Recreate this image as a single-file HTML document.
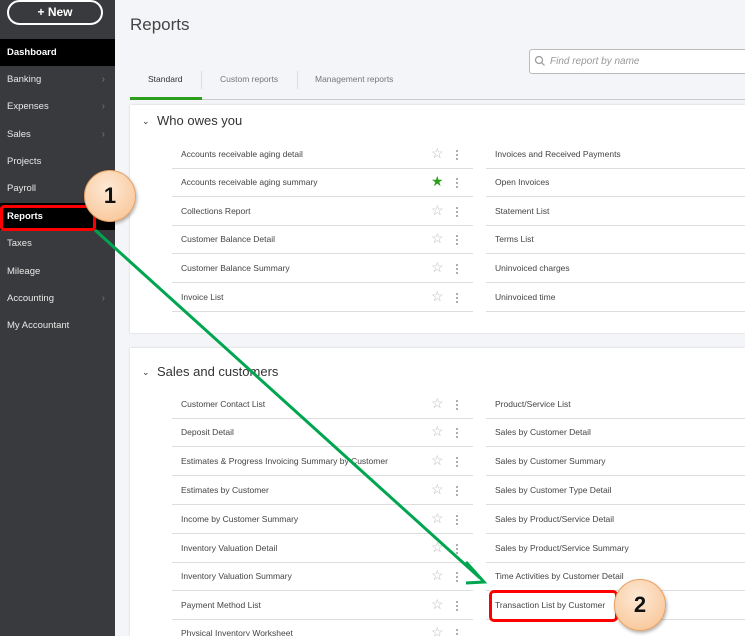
<!DOCTYPE html>
<html style="overflow:hidden;width:745px;height:636px"><head><style>
*{margin:0;padding:0;box-sizing:border-box}
body{width:745px;height:636px;overflow:hidden;background:#f4f5f8;font-family:"Liberation Sans",sans-serif;position:relative}
.sb{position:absolute;left:0;top:0;width:115px;height:636px;background:#393a3d}
.new{position:absolute;left:7px;top:0px;width:96px;height:25px;border:2px solid #fff;border-radius:13px;color:#fff;font-size:12px;font-weight:bold;text-align:center;line-height:21px}
.nav{position:absolute;left:0;width:115px;height:27px;color:#e8e8e8;font-size:9.5px;padding-left:7px;line-height:27px}
.nav.on{background:#000;color:#fff;font-weight:bold}
.nav .ch{position:absolute;right:10px;color:#777;font-size:10px}
.t{position:absolute;color:#444;font-size:8.5px}
.card{position:absolute;left:130px;width:615px;background:#fff;box-shadow:0 0 2px #ccc}
.row{position:absolute;height:1px;background:#ddd}
.st{position:absolute;color:#bbb;font-size:14px;line-height:14px}
.dt{position:absolute;width:2px;height:11px;background:radial-gradient(circle,#999 0.9px,transparent 1.1px) 0 0/2px 4px}
.circ{position:absolute;width:52px;height:52px;border-radius:50%;background:radial-gradient(circle at 45% 35%,#fde9d6,#f8c08d);border:1px solid #e8a060;font-size:22px;font-weight:bold;text-align:center;line-height:50px;color:#111;box-shadow:1px 2px 3px rgba(0,0,0,.3)}
.chev{position:absolute;left:142px;font-size:9px;color:#333}
</style></head><body>
<div class="sb">
<div class="new">+ New</div>
<div class="nav on" style="top:39px">Dashboard</div>
<div class="nav" style="top:66px">Banking<span class="ch">›</span></div>
<div class="nav" style="top:93px">Expenses<span class="ch">›</span></div>
<div class="nav" style="top:121px">Sales<span class="ch">›</span></div>
<div class="nav" style="top:148px">Projects</div>
<div class="nav" style="top:175px">Payroll</div>
<div class="nav on" style="top:203px">Reports</div>
<div class="nav" style="top:230px">Taxes</div>
<div class="nav" style="top:258px">Mileage</div>
<div class="nav" style="top:285px">Accounting<span class="ch">›</span></div>
<div class="nav" style="top:312px">My Accountant</div>
</div>
<div style="position:absolute;left:0;top:205px;width:96px;height:26px;border:3px solid #f00;border-radius:4px"></div>
<div style="position:absolute;left:130px;top:15px;font-size:17px;color:#444">Reports</div>
<div style="position:absolute;left:529px;top:49px;width:220px;height:25px;border:1px solid #bbb;border-radius:3px;background:#fff;font-size:10px;color:#999;font-style:italic;line-height:23px;padding-left:20px">Find report by name</div>
<svg style="position:absolute;left:534px;top:55px" width="12" height="12"><circle cx="5" cy="5" r="3.5" fill="none" stroke="#999" stroke-width="1.2"/><line x1="7.5" y1="7.5" x2="10.5" y2="10.5" stroke="#999" stroke-width="1.2"/></svg>
<div class="t" style="left:148px;top:74px;color:#333">Standard</div>
<div class="t" style="left:220px;top:74px;color:#777">Custom reports</div>
<div class="t" style="left:315px;top:74px;color:#777">Management reports</div>
<div style="position:absolute;left:201px;top:71px;width:1px;height:18px;background:#ddd"></div>
<div style="position:absolute;left:297px;top:71px;width:1px;height:18px;background:#ddd"></div>
<div style="position:absolute;left:130px;top:99px;width:615px;height:1px;background:#ccc"></div>
<div style="position:absolute;left:130px;top:97px;width:72px;height:3px;background:#2ca01c"></div>
<div class="card" style="top:105px;height:228px"></div>
<div class="card" style="top:348px;height:288px"></div>
<div class="chev" style="top:116px">&#8964;</div>
<div style="position:absolute;left:157px;top:113px;font-size:13px;color:#333">Who owes you</div>
<div class="chev" style="top:367px">&#8964;</div>
<div style="position:absolute;left:157px;top:364px;font-size:13px;color:#333">Sales and customers</div>
<div id="rows"></div>
<svg style="position:absolute;left:0;top:0" width="745" height="636">
<line x1="95" y1="230" x2="480" y2="578" stroke="#00a64f" stroke-width="3"/>
<polyline points="466,562 484,582 466,583" fill="none" stroke="#00a64f" stroke-width="3"/>
</svg>
<div style="position:absolute;left:489px;top:590px;width:129px;height:32px;border:3px solid #f00;border-radius:5px"></div>
<div class="circ" style="left:84px;top:170px">1</div>
<div class="circ" style="left:614px;top:579px">2</div>
<script>
var L1=["Accounts receivable aging detail","Accounts receivable aging summary","Collections Report","Customer Balance Detail","Customer Balance Summary","Invoice List"];
var R1=["Invoices and Received Payments","Open Invoices","Statement List","Terms List","Uninvoiced charges","Uninvoiced time"];
var Y1=[154,182,211,239,268,297];
var L2=["Customer Contact List","Deposit Detail","Estimates & Progress Invoicing Summary by Customer","Estimates by Customer","Income by Customer Summary","Inventory Valuation Detail","Inventory Valuation Summary","Payment Method List","Physical Inventory Worksheet"];
var R2=["Product/Service List","Sales by Customer Detail","Sales by Customer Summary","Sales by Customer Type Detail","Sales by Product/Service Detail","Sales by Product/Service Summary","Time Activities by Customer Detail","Transaction List by Customer",""];
var Y2=[404,432,461,490,519,548,576,605,633];
var h="";
function add(L,R,Y,fav){for(var i=0;i<L.length;i++){var y=Y[i];
h+='<div class="t" style="left:181px;top:'+(y-5)+'px">'+L[i].replace("&","&amp;")+'</div>';
h+='<div class="t" style="left:495px;top:'+(y-5)+'px">'+R[i]+'</div>';
h+='<div class="st" style="left:431px;top:'+(y-8)+'px;'+(fav===i?'color:#2ca01c':'')+'">'+(fav===i?'★':'☆')+'</div>';
h+='<div class="dt" style="left:456px;top:'+(y-5)+'px"></div>';
if(i<L.length-1||L.length==6){h+='<div class="row" style="left:172px;width:301px;top:'+(y+14)+'px"></div><div class="row" style="left:486px;width:259px;top:'+(y+14)+'px"></div>';}}}
add(L1,R1,Y1,1);add(L2,R2,Y2,-1);
document.getElementById("rows").innerHTML=h;
</script>
</body></html>
